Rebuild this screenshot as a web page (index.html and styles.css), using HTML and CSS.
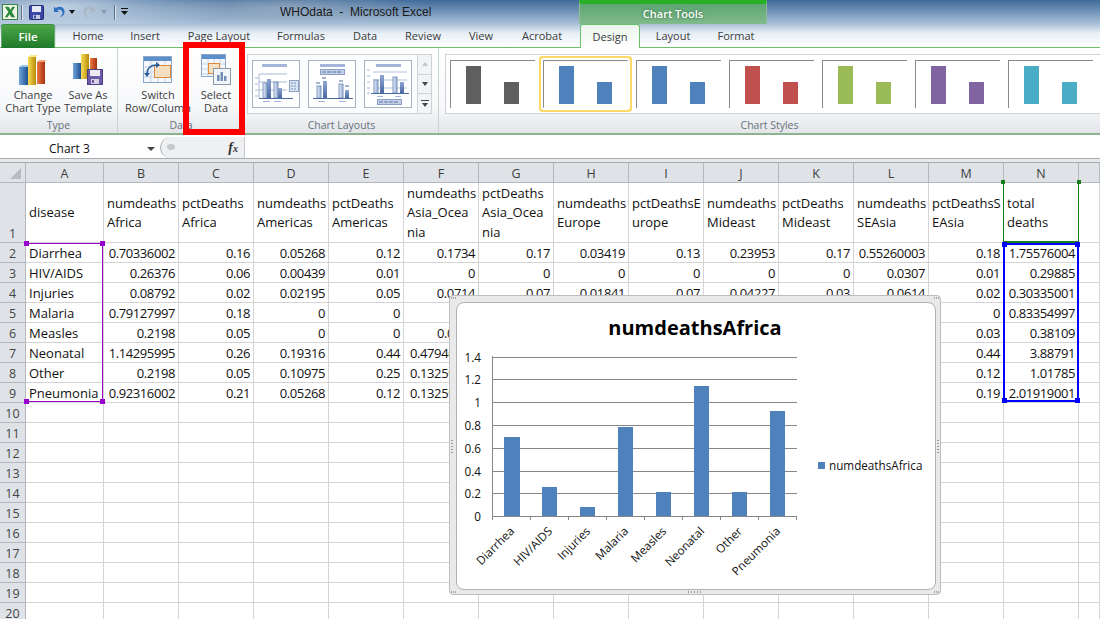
FILE: index.html
```html
<!DOCTYPE html>
<html lang="en">
<head>
    <meta charset="UTF-8">
    <meta name="viewport" content="width=device-width, initial-scale=1.0">
    <title>WHOdata - Microsoft Excel</title>
    <link rel="stylesheet" href="styles.css">
</head>
<body>
    <svg class="defs" width="0" height="0">
        <defs>
            <linearGradient id="barBlue" x1="0" x2="1" y1="0" y2="0"><stop offset="0" stop-color="#6fa6dc"/><stop offset="1" stop-color="#1f4f8f"/></linearGradient>
            <linearGradient id="barYellow" x1="0" x2="1" y1="0" y2="0"><stop offset="0" stop-color="#f7dc55"/><stop offset="1" stop-color="#b98a08"/></linearGradient>
            <linearGradient id="barRed" x1="0" x2="1" y1="0" y2="0"><stop offset="0" stop-color="#ec7a45"/><stop offset="1" stop-color="#a8300f"/></linearGradient>
            <linearGradient id="thumbBar" x1="0" x2="1" y1="0" y2="0"><stop offset="0" stop-color="#eef3fa"/><stop offset="1" stop-color="#8ea8d2"/></linearGradient>
            <linearGradient id="thumbBarDark" x1="0" x2="0" y1="0" y2="1"><stop offset="0" stop-color="#8fa6cf"/><stop offset="1" stop-color="#4a6aa5"/></linearGradient>
        </defs>
    </svg>

    <div class="titlebar">
        <div class="qat">
            <svg class="qat-logo" width="16" height="16" viewBox="0 0 17 17"><rect x="0.5" y="0.5" width="16" height="16" fill="#eef5e6" stroke="#2f7d3a"/><path d="M3 3h4l2 3 2-3h3l-3.6 5.2L14 14h-4l-2-3.2L6 14H3l3.8-5.6z" fill="#2a8a3a"/></svg>
            <span class="qat-sep"></span>
            <svg class="qat-save" width="15" height="15" viewBox="0 0 15 15"><rect x="0.5" y="0.5" width="14" height="14" rx="1" fill="#3c48a8" stroke="#20286e"/><rect x="3" y="1" width="9" height="6" fill="#e6eaf6"/><rect x="4" y="10" width="7" height="4" fill="#c9cde0"/><rect x="5" y="10.5" width="2" height="3" fill="#3c48a8"/></svg>
            <svg class="qat-undo" width="13" height="14" viewBox="0 0 14 14"><path d="M2 1v6h6L5.6 5C7 3.600 10 4 11 6.400c.8 2-.1 4.400-2.600 6.600C13 11.400 14.600 7 12.800 4 11 1 7 .6 4.200 3z" fill="#2f6fc0"/></svg>
            <span class="qat-drop"></span>
            <svg class="qat-redo" width="14" height="14" viewBox="0 0 14 14"><path d="M12 1v6H6l2.400-2C7 3.600 4 4 3 6.400c-.8 2 .1 4.400 2.600 6.600C1 11.400-.6 7 1.200 4 3 1 7 .6 9.800 3z" fill="#a9b6c4"/></svg>
            <span class="qat-drop muted"></span>
            <span class="qat-sep"></span>
            <svg class="qat-more" width="7" height="8" viewBox="0 0 7 8"><path d="M0 0h7v1H0zM0 3h7L3.500 7z" fill="#111"/></svg>
        </div>
        <div class="doc-title">WHOdata &nbsp;-&nbsp; Microsoft Excel</div>
        <div class="tools-band">Chart Tools</div>
    </div>

    <div class="tabs">
        <div class="tab tab-file">File</div>
        <div class="tab tab-home">Home</div>
        <div class="tab tab-insert">Insert</div>
        <div class="tab tab-page">Page Layout</div>
        <div class="tab tab-formulas">Formulas</div>
        <div class="tab tab-data">Data</div>
        <div class="tab tab-review">Review</div>
        <div class="tab tab-view">View</div>
        <div class="tab tab-acrobat">Acrobat</div>
        <div class="tab tab-design">Design</div>
        <div class="tab tab-layout">Layout</div>
        <div class="tab tab-format">Format</div>
    </div>

    <div class="ribbon">
        <div class="group group-type">
            <div class="group-body">
                <div class="big-btn btn-change">
                    <div class="big-icon">
                        <svg width="32" height="32" viewBox="-1 0 32 32">
                            <rect x="1" y="13" width="9" height="18" fill="url(#barBlue)"/><path d="M1 13l3-2h8l-2 2z" fill="#9cc3ea"/>
                            <rect x="10" y="3" width="8" height="28" fill="url(#barYellow)"/><path d="M10 3l3-2h7l-2 2z" fill="#fbeb8e"/>
                            <rect x="19" y="8" width="8" height="22" fill="url(#barRed)"/><path d="M19 8l2-2h7l-1 2z" fill="#f4a27c"/>
                        </svg>
                    </div>
                    <span>Change<br>Chart Type</span>
                </div>
                <div class="big-btn btn-saveas">
                    <div class="big-icon">
                        <svg width="32" height="32" viewBox="0 0 32 32">
                            <rect x="1" y="9" width="8" height="16" fill="url(#barBlue)"/>
                            <rect x="9" y="0" width="8" height="25" fill="url(#barYellow)"/>
                            <rect x="18" y="4" width="7" height="20" fill="url(#barRed)"/>
                            <rect x="15.500" y="15.500" width="15" height="15" fill="#6f5aa8" stroke="#4c3c80"/>
                            <rect x="18" y="16" width="10" height="6" fill="#eceaf4"/>
                            <rect x="19" y="25" width="8" height="5" fill="#d6d2e6"/><rect x="20" y="26" width="2" height="3" fill="#6f5aa8"/>
                        </svg>
                    </div>
                    <span>Save As<br>Template</span>
                </div>
            </div>
            <div class="group-label">Type</div>
        </div>
        <div class="group group-data">
            <div class="group-body">
                <div class="big-btn btn-switch">
                    <div class="big-icon">
                        <svg width="30" height="30" viewBox="0 -2 30 30">
                            <rect x="0.500" y="0.500" width="28" height="26" fill="#f4f8fd" stroke="#8aa6c8"/>
                            <rect x="1" y="1" width="27" height="4" fill="#5d8fcb"/>
                            <path d="M1 11h27M1 16h27M1 21h27M8 5v21M15 5v21M22 5v21" stroke="#c3d2e4"/>
                            <rect x="11.500" y="9.500" width="16" height="12" fill="#f4dfc0" stroke="#e08a3c"/>
                            <path d="M4 18c0-6 4-9 10-9" fill="none" stroke="#2b5c9e" stroke-width="1.500"/><path d="M13 6l4 3-4 3z" fill="#2b5c9e"/>
                            <path d="M1 17h6l-3 4z" fill="#2b5c9e"/>
                        </svg>
                    </div>
                    <span>Switch<br>Row/Column</span>
                </div>
                <div class="big-btn btn-select">
                    <div class="big-icon">
                        <svg width="30" height="32" viewBox="0 0 30 32">
                            <rect x="0.500" y="0.500" width="24" height="22" fill="#f4f8fd" stroke="#8aa6c8"/>
                            <rect x="1" y="1" width="23" height="4" fill="#5d8fcb"/>
                            <path d="M1 10h23M1 15h23M1 20h23M7 5v17M13 5v17M19 5v17" stroke="#c3d2e4"/>
                            <rect x="7.500" y="9.500" width="11" height="10" fill="#f6e0c2" stroke="#e08a3c"/>
                            <rect x="12.500" y="14.500" width="17" height="16" fill="#f1f4f8" stroke="#8b98a8"/>
                            <path d="M16 27v-6h2.500v6zM19.500 27v-9H22v9zM23 27v-5h2.500v5z" fill="#6f8fb4"/>
                        </svg>
                    </div>
                    <span>Select<br>Data</span>
                </div>
            </div>
            <div class="group-label">Data</div>
        </div>
        <div class="group group-layouts">
            <div class="group-body">
                <div class="layout-gallery">
                    <div class="thumb">
                        <svg width="46" height="46" viewBox="0 0 46 46">
                            <rect x="9" y="3" width="25" height="3" fill="#a3b5da"/>
                            <path d="M6 13h28M6 21h28M6 29h28M6 13v24" stroke="#a9b8d2" fill="none"/>
                            <path d="M2 17h3M2 23h3M2 29h3M2 35h3" stroke="#a9b8d2"/>
                            <rect x="10" y="22" width="4" height="15" fill="url(#thumbBar)" stroke="#7f96bf"/>
                            <rect x="14" y="18" width="4" height="19" fill="url(#thumbBarDark)"/>
                            <rect x="21" y="21" width="4" height="16" fill="url(#thumbBar)" stroke="#7f96bf"/>
                            <rect x="25" y="27" width="4" height="10" fill="url(#thumbBarDark)"/>
                            <path d="M6 37.500h34" stroke="#4d6a9e"/>
                            <path d="M10 40.500h7M21 40.500h7" stroke="#a3b5da"/>
                            <rect x="36.500" y="19.500" width="9" height="11" fill="#dde5f2" stroke="#8aa0c8"/>
                            <path d="M38 22h6M38 25h6M38 28h6" stroke="#6f8fb4" stroke-dasharray="2 1"/>
                        </svg>
                    </div>
                    <div class="thumb">
                        <svg width="46" height="46" viewBox="0 0 46 46">
                            <rect x="11" y="3" width="25" height="3" fill="#a3b5da"/>
                            <rect x="11.500" y="8.500" width="24" height="5" fill="#c3d0e6" stroke="#8aa0c8"/>
                            <path d="M13 11h20" stroke="#5b75a5" stroke-dasharray="4 1"/>
                            <path d="M7 22h4M13 17h4M30 20h4M36 25h4" stroke="#4d6a9e"/>
                            <rect x="8" y="25" width="4" height="12" fill="url(#thumbBar)" stroke="#7f96bf"/>
                            <rect x="14" y="20" width="4" height="17" fill="url(#thumbBarDark)"/>
                            <rect x="30" y="23" width="4" height="14" fill="url(#thumbBar)" stroke="#7f96bf"/>
                            <rect x="36" y="29" width="4" height="8" fill="url(#thumbBarDark)"/>
                            <path d="M4 37.500h40" stroke="#4d6a9e"/>
                            <path d="M9 40.500h7M30 40.500h7" stroke="#a3b5da"/>
                        </svg>
                    </div>
                    <div class="thumb">
                        <svg width="46" height="46" viewBox="0 0 46 46">
                            <rect x="11" y="3" width="25" height="3" fill="#a3b5da"/>
                            <path d="M8 11h34M8 19h34M8 27h34" stroke="#b5c3da"/>
                            <path d="M2 9h3M2 15h3M2 21h3M2 27h3M2 32h3" stroke="#a9b8d2"/>
                            <rect x="9" y="19" width="4" height="13" fill="url(#thumbBar)" stroke="#7f96bf"/>
                            <rect x="15" y="14" width="4" height="18" fill="url(#thumbBarDark)"/>
                            <rect x="28" y="16" width="4" height="16" fill="url(#thumbBar)" stroke="#7f96bf"/>
                            <rect x="35" y="21" width="4" height="11" fill="url(#thumbBarDark)"/>
                            <path d="M6 32.500h38" stroke="#4d6a9e"/>
                            <path d="M12 35.500h6M30 35.500h6" stroke="#a3b5da"/>
                            <rect x="12.500" y="38.500" width="24" height="5" fill="#c3d0e6" stroke="#8aa0c8"/>
                            <path d="M14 41h20" stroke="#5b75a5" stroke-dasharray="4 1"/>
                        </svg>
                    </div>
                    <div class="scroller">
                        <div class="scroll-btn"><i class="arrow-up"></i></div>
                        <div class="scroll-btn"><i class="arrow-down"></i></div>
                        <div class="scroll-btn"><i class="arrow-more"></i></div>
                    </div>
                </div>
            </div>
            <div class="group-label">Chart Layouts</div>
        </div>
        <div class="group group-styles">
            <div class="group-body">
                <div class="style-gallery">
                    <div class="style-tile"><i class="bar tall c-gray"></i><i class="bar short c-gray"></i></div>
                    <div class="style-tile selected"><i class="bar tall c-blue"></i><i class="bar short c-blue"></i></div>
                    <div class="style-tile"><i class="bar tall c-blue"></i><i class="bar short c-blue"></i></div>
                    <div class="style-tile"><i class="bar tall c-red"></i><i class="bar short c-red"></i></div>
                    <div class="style-tile"><i class="bar tall c-green"></i><i class="bar short c-green"></i></div>
                    <div class="style-tile"><i class="bar tall c-purple"></i><i class="bar short c-purple"></i></div>
                    <div class="style-tile"><i class="bar tall c-teal"></i><i class="bar short c-teal"></i></div>
                </div>
            </div>
            <div class="group-label">Chart Styles</div>
        </div>
    </div>
    <div class="select-box"></div>

    <div class="formula-bar">
        <div class="name-box">Chart 3<i class="name-arrow"></i></div>
        <div class="fx-box"><span class="fx-grip"></span><span class="fx">f<small>x</small></span></div>
        <div class="formula-input"></div>
    </div>
    <div class="formula-gap"></div>

    <div class="sheet">
        <table class="grid">
            <colgroup><col class="c-row"><col class="c-a"><col span="13" class="c-std"><col class="c-end"></colgroup>
            <tr class="head"><th class="corner"><i></i></th><th>A</th><th>B</th><th>C</th><th>D</th><th>E</th><th>F</th><th>G</th><th>H</th><th>I</th><th>J</th><th>K</th><th>L</th><th>M</th><th>N</th><th></th></tr>
            <tr class="row-title"><th class="rn">1</th><td>disease</td><td>numdeaths<br>Africa</td><td>pctDeaths<br>Africa</td><td>numdeaths<br>Americas</td><td>pctDeaths<br>Americas</td><td>numdeaths<br>Asia_Ocea<br>nia</td><td>pctDeaths<br>Asia_Ocea<br>nia</td><td>numdeaths<br>Europe</td><td>pctDeathsE<br>urope</td><td>numdeaths<br>Mideast</td><td>pctDeaths<br>Mideast</td><td>numdeaths<br>SEAsia</td><td>pctDeathsS<br>EAsia</td><td>total<br>deaths</td><td></td></tr>
            <tr><th class="rn">2</th><td>Diarrhea</td><td class="n">0.70336002</td><td class="n">0.16</td><td class="n">0.05268</td><td class="n">0.12</td><td class="n">0.1734</td><td class="n">0.17</td><td class="n">0.03419</td><td class="n">0.13</td><td class="n">0.23953</td><td class="n">0.17</td><td class="n">0.55260003</td><td class="n">0.18</td><td class="n">1.75576004</td><td></td></tr>
            <tr><th class="rn">3</th><td>HIV/AIDS</td><td class="n">0.26376</td><td class="n">0.06</td><td class="n">0.00439</td><td class="n">0.01</td><td class="n">0</td><td class="n">0</td><td class="n">0</td><td class="n">0</td><td class="n">0</td><td class="n">0</td><td class="n">0.0307</td><td class="n">0.01</td><td class="n">0.29885</td><td></td></tr>
            <tr><th class="rn">4</th><td>Injuries</td><td class="n">0.08792</td><td class="n">0.02</td><td class="n">0.02195</td><td class="n">0.05</td><td class="n">0.0714</td><td class="n">0.07</td><td class="n">0.01841</td><td class="n">0.07</td><td class="n">0.04227</td><td class="n">0.03</td><td class="n">0.0614</td><td class="n">0.02</td><td class="n">0.30335001</td><td></td></tr>
            <tr><th class="rn">5</th><td>Malaria</td><td class="n">0.79127997</td><td class="n">0.18</td><td class="n">0</td><td class="n">0</td><td></td><td></td><td></td><td></td><td></td><td></td><td></td><td class="n">0</td><td class="n">0.83354997</td><td></td></tr>
            <tr><th class="rn">6</th><td>Measles</td><td class="n">0.2198</td><td class="n">0.05</td><td class="n">0</td><td class="n">0</td><td class="cut cut-short">0.0</td><td></td><td></td><td></td><td></td><td></td><td></td><td class="n">0.03</td><td class="n">0.38109</td><td></td></tr>
            <tr><th class="rn">7</th><td>Neonatal</td><td class="n">1.14295995</td><td class="n">0.26</td><td class="n">0.19316</td><td class="n">0.44</td><td class="cut">0.47940</td><td></td><td></td><td></td><td></td><td></td><td></td><td class="n">0.44</td><td class="n">3.88791</td><td></td></tr>
            <tr><th class="rn">8</th><td>Other</td><td class="n">0.2198</td><td class="n">0.05</td><td class="n">0.10975</td><td class="n">0.25</td><td class="cut">0.13259</td><td></td><td></td><td></td><td></td><td></td><td></td><td class="n">0.12</td><td class="n">1.01785</td><td></td></tr>
            <tr><th class="rn">9</th><td>Pneumonia</td><td class="n">0.92316002</td><td class="n">0.21</td><td class="n">0.05268</td><td class="n">0.12</td><td class="cut">0.13259</td><td></td><td></td><td></td><td></td><td></td><td></td><td class="n">0.19</td><td class="n">2.01919001</td><td></td></tr>
            <tr><th class="rn">10</th><td></td><td></td><td></td><td></td><td></td><td></td><td></td><td></td><td></td><td></td><td></td><td></td><td></td><td></td><td></td></tr>
            <tr><th class="rn">11</th><td></td><td></td><td></td><td></td><td></td><td></td><td></td><td></td><td></td><td></td><td></td><td></td><td></td><td></td><td></td></tr>
            <tr><th class="rn">12</th><td></td><td></td><td></td><td></td><td></td><td></td><td></td><td></td><td></td><td></td><td></td><td></td><td></td><td></td><td></td></tr>
            <tr><th class="rn">13</th><td></td><td></td><td></td><td></td><td></td><td></td><td></td><td></td><td></td><td></td><td></td><td></td><td></td><td></td><td></td></tr>
            <tr><th class="rn">14</th><td></td><td></td><td></td><td></td><td></td><td></td><td></td><td></td><td></td><td></td><td></td><td></td><td></td><td></td><td></td></tr>
            <tr><th class="rn">15</th><td></td><td></td><td></td><td></td><td></td><td></td><td></td><td></td><td></td><td></td><td></td><td></td><td></td><td></td><td></td></tr>
            <tr><th class="rn">16</th><td></td><td></td><td></td><td></td><td></td><td></td><td></td><td></td><td></td><td></td><td></td><td></td><td></td><td></td><td></td></tr>
            <tr><th class="rn">17</th><td></td><td></td><td></td><td></td><td></td><td></td><td></td><td></td><td></td><td></td><td></td><td></td><td></td><td></td><td></td></tr>
            <tr><th class="rn">18</th><td></td><td></td><td></td><td></td><td></td><td></td><td></td><td></td><td></td><td></td><td></td><td></td><td></td><td></td><td></td></tr>
            <tr><th class="rn">19</th><td></td><td></td><td></td><td></td><td></td><td></td><td></td><td></td><td></td><td></td><td></td><td></td><td></td><td></td><td></td></tr>
            <tr><th class="rn">20</th><td></td><td></td><td></td><td></td><td></td><td></td><td></td><td></td><td></td><td></td><td></td><td></td><td></td><td></td><td></td></tr>
        </table>

        <!-- range highlights for the selected chart -->
        <div class="range range-cats"><i class="h tl"></i><i class="h tr"></i><i class="h bl"></i><i class="h br"></i></div>
        <div class="range range-name"><i class="h tl"></i><i class="h tr"></i></div>
        <div class="range range-values"><i class="h tl"></i><i class="h tr"></i><i class="h bl"></i><i class="h br"></i></div>

        <div class="chart">
            <div class="chart-inner">
                <!-- coordinates below are relative to the white chart area -->
                <svg class="plot" width="480" height="287" viewBox="0 0 480 287">
                    <text class="chart-title" x="238" y="32" text-anchor="middle">numdeathsAfrica</text>
                    <g class="gridlines">
                        <path d="M35 54.500h305M35 76.500h305M35 99.500h305M35 122.500h305M35 145.500h305M35 168.500h305M35 190.500h305"/>
                    </g>
                    <g class="y-labels" text-anchor="end">
                        <text x="24" y="59">1.4</text><text x="24" y="81">1.2</text><text x="24" y="104">1</text><text x="24" y="127">0.8</text><text x="24" y="150">0.6</text><text x="24" y="173">0.4</text><text x="24" y="195">0.2</text><text x="24" y="218">0</text>
                    </g>
                    <g class="bars">
                        <rect x="47" y="134" width="16" height="79"/>
                        <rect x="85" y="184" width="15" height="29"/>
                        <rect x="123" y="204" width="15" height="9"/>
                        <rect x="161" y="124" width="15" height="89"/>
                        <rect x="199" y="189" width="15" height="24"/>
                        <rect x="237" y="83" width="15" height="130"/>
                        <rect x="275" y="189" width="15" height="24"/>
                        <rect x="313" y="108" width="15" height="105"/>
                    </g>
                    <path class="axis" d="M35.500 53v164M35 213.500h305M73.500 213v4M111.500 213v4M149.500 213v4M187.500 213v4M225.500 213v4M263.500 213v4M301.500 213v4M339.500 213v4"/>
                    <g class="x-labels" text-anchor="end">
                        <text transform="translate(58 229) rotate(-45)">Diarrhea</text>
                        <text transform="translate(96 229) rotate(-45)">HIV/AIDS</text>
                        <text transform="translate(134 229) rotate(-45)">Injuries</text>
                        <text transform="translate(172 229) rotate(-45)">Malaria</text>
                        <text transform="translate(210 229) rotate(-45)">Measles</text>
                        <text transform="translate(248 229) rotate(-45)">Neonatal</text>
                        <text transform="translate(286 229) rotate(-45)">Other</text>
                        <text transform="translate(324 229) rotate(-45)">Pneumonia</text>
                    </g>
                    <rect class="bars" x="361" y="159" width="7" height="7"/>
                    <text class="legend" x="372" y="167">numdeathsAfrica</text>
                </svg>
            </div>
            <span class="grip grip-left"></span>
            <span class="grip grip-right"></span>
            <span class="grip-bottom"></span>
            <span class="dots dots-tl"></span>
            <span class="dots dots-tr"></span>
            <span class="dots dots-bl"></span>
            <span class="dots dots-br"></span>
        </div>
    </div>
</body>
</html>
```
FILE: styles.css
```css
html, body {
    margin: 0;
    padding: 0;
    width: 1100px;
    height: 619px;
    overflow: hidden;
    background-color: #ffffff;
    font-family: 'Open Sans', 'Noto Sans', sans-serif;
    color: #222;
}
.defs {
    position: absolute;
}

/* title bar */
.titlebar {
    position: relative;
    height: 24px;
    display: flex;
    background:
        radial-gradient(ellipse 170px 30px at 60px 6px, rgba(225, 235, 245, 0.75), rgba(225, 235, 245, 0)),
        radial-gradient(ellipse 150px 20px at 280px 8px, rgba(170, 185, 200, 0.6), rgba(170, 185, 200, 0)),
        linear-gradient(#3f6a9a, #a9c0d8);
}
.qat {
    display: flex;
    align-items: center;
    height: 24px;
    padding-left: 2px;
}
.qat-logo { margin-right: 3px; }
.qat-sep {
    width: 1px;
    height: 15px;
    background-color: #5f6f80;
    box-shadow: 1px 0 0 rgba(255, 255, 255, 0.6);
}
.qat-save { margin: 0 8px 0 7px; }
.qat-undo { margin-right: 4px; }
.qat-redo { margin: 0 4px 0 8px; }
.qat-drop {
    width: 0;
    height: 0;
    border: 3px solid transparent;
    border-top: 4px solid #111;
    margin-top: 3px;
}
.qat-drop.muted {
    border-top-color: #8496a8;
    margin-right: 7px;
}
.qat-more { margin-left: 6px; }
.doc-title {
    position: absolute;
    left: 280px;
    top: 4px;
    font-family: 'Liberation Sans', sans-serif;
    font-size: 12px;
    line-height: 17px;
    color: #1a1a1a;
    white-space: nowrap;
}
.tools-band {
    position: absolute;
    left: 579px;
    top: 0;
    width: 188px;
    height: 47px;
    box-sizing: border-box;
    border-top: 4px solid #27b026;
    border-left: 1px solid #8fbf96;
    border-right: 1px solid #8fbf96;
    background: linear-gradient(#5ea573, #7fba8b 45%, #f2f8f3 100%);
    color: #fff;
    font-size: 11px;
    font-weight: 600;
    text-align: center;
    line-height: 20px;
    text-shadow: 0 0 3px rgba(30, 90, 40, 0.8);
}

/* tabs */
.tabs {
    position: relative;
    height: 24px;
    box-sizing: border-box;
    background: linear-gradient(#a9c0d8, #e6eef6 40%, #ffffff);
    font-size: 11px;
    color: #3b3b3b;
    border-bottom: 1px solid #6cc06c;
}
.tab {
    position: absolute;
    top: 0;
    height: 23px;
    line-height: 24px;
    text-align: center;
    transform: translateX(-50%);
    white-space: nowrap;
}
.tab-file {
    left: 28px;
    width: 55px;
    height: 24px;
    box-sizing: border-box;
    background: linear-gradient(#4ea646, #1d7a2b);
    border: 1px solid #3e8d43;
    border-bottom: none;
    border-radius: 4px 4px 0 0;
    color: #fff;
    font-weight: 600;
    font-size: 11.500px;
}
.tab-home { left: 88px; }
.tab-insert { left: 145px; }
.tab-page { left: 219px; }
.tab-formulas { left: 301px; }
.tab-data { left: 365px; }
.tab-review { left: 423px; }
.tab-view { left: 481px; }
.tab-acrobat { left: 542px; }
.tab-design {
    left: 610px;
    width: 60px;
    height: 24px;
    box-sizing: border-box;
    background: linear-gradient(#eaf5ec, #ffffff);
    border: 1px solid #6cc06c;
    border-bottom: none;
    border-radius: 3px 3px 0 0;
    z-index: 1;
}
.tab-layout { left: 673px; }
.tab-format { left: 736px; }

/* ribbon */
.ribbon {
    height: 87px;
    box-sizing: border-box;
    display: flex;
    background: linear-gradient(#ffffff, #f7f8fa 70%, #e2e5e9);
    border-bottom: 2px solid #8db48f;
    font-size: 11px;
    color: #3c3c3c;
}
.group {
    flex: none;
    display: flex;
    flex-direction: column;
    border-right: 1px solid #c6d6c8;
    box-sizing: border-box;
}
.group-body {
    height: 70px;
    display: flex;
}
.group-label {
    height: 15px;
    line-height: 14px;
    text-align: center;
    color: #67707c;
    font-size: 10.500px;
}
.group-type { width: 118px; }
.group-data { width: 127px; }
.group-layouts { width: 194px; }
.group-styles {
    flex: 1;
    min-width: 0;
    border-right: none;
}
.big-btn {
    display: flex;
    flex-direction: column;
    align-items: center;
    white-space: nowrap;
    text-align: center;
    line-height: 13px;
}
.big-icon {
    height: 34px;
    margin-top: 6px;
}
.big-icon svg { display: block; }
.btn-change { width: 56px; margin-left: 5px; }
.btn-saveas { width: 54px; }
.btn-switch { width: 66px; margin-left: 7px; }
.btn-select { width: 50px; }

/* chart layouts gallery */
.layout-gallery {
    display: flex;
    align-self: flex-start;
    box-sizing: border-box;
    width: 185px;
    height: 60px;
    margin: 6px 0 0 2px;
    padding-left: 4px;
    border: 1px solid #cfd3d8;
    border-right: none;
    background-color: #fbfcfd;
    align-items: center;
    gap: 8px;
}
.thumb {
    width: 48px;
    height: 48px;
    box-sizing: border-box;
    border: 1px solid #a9b3c0;
    background-color: #ffffff;
}
.thumb svg { display: block; }
.scroller {
    display: flex;
    flex-direction: column;
    margin: -1px 0 -1px -3px;
    height: 60px;
    width: 15px;
    box-sizing: border-box;
    border: 1px solid #cfd3d8;
    background-color: #f2f4f6;
}
.scroll-btn {
    flex: 1;
    display: flex;
    align-items: center;
    justify-content: center;
    border-bottom: 1px solid #cfd3d8;
}
.scroll-btn:last-child { border-bottom: none; }
.arrow-up {
    border: 3px solid transparent;
    border-bottom: 4px solid #c2c6cc;
    border-top: none;
}
.arrow-down {
    border: 3px solid transparent;
    border-top: 4px solid #444;
    border-bottom: none;
}
.arrow-more {
    position: relative;
    top: 1px;
    border: 3px solid transparent;
    border-top: 4px solid #444;
    border-bottom: none;
}
.arrow-more::before {
    content: '';
    position: absolute;
    left: -4px;
    top: -7px;
    width: 8px;
    height: 1px;
    background-color: #444;
}

/* chart styles gallery */
.style-gallery {
    display: flex;
    align-self: flex-start;
    align-items: center;
    box-sizing: border-box;
    width: 660px;
    height: 60px;
    margin: 6px 0 0 6px;
    padding-left: 4px;
    gap: 8px;
    border: 1px solid #cfd3d8;
    border-right: none;
    background-color: #ffffff;
}
.style-tile {
    position: relative;
    flex: none;
    width: 85px;
    height: 48px;
    box-sizing: border-box;
    border-top: 1px solid #8a8a8a;
    border-left: 1px solid #8a8a8a;
}
.style-tile.selected {
    box-shadow: 0 0 0 2px #fff, 0 0 0 4px #ffd966;
    border-radius: 1px;
}
.bar {
    position: absolute;
    bottom: 4px;
    width: 15px;
}
.bar.tall { left: 15px; height: 38px; }
.bar.short { left: 53px; height: 22px; }
.c-gray { background-color: #5f5f5f; }
.c-blue { background-color: #4f81bd; }
.c-red { background-color: #c0504d; }
.c-green { background-color: #9bbb59; }
.c-purple { background-color: #8064a2; }
.c-teal { background-color: #4bacc6; }

/* red annotation around Select Data */
.select-box {
    position: absolute;
    left: 183px;
    top: 42px;
    width: 50px;
    height: 81px;
    border: 6px solid #ff0000;
}

/* formula bar */
.formula-bar {
    display: flex;
    height: 22px;
    box-sizing: border-box;
    margin-top: 2px;
    background-color: #ffffff;
    border-bottom: 1px solid #a8acb0;
    font-size: 12px;
}
.name-box {
    position: relative;
    width: 160px;
    line-height: 23px;
    padding-left: 49px;
    box-sizing: border-box;
    color: #111;
}
.name-arrow {
    position: absolute;
    left: 147px;
    top: 10px;
    border: 4px solid transparent;
    border-top: 4px solid #444;
    border-bottom: none;
}
.fx-box {
    position: relative;
    width: 85px;
    box-sizing: border-box;
    background-color: #eef0f2;
    border-left: 1px solid #a8acb0;
    border-right: 1px solid #c4c8cc;
    border-radius: 11px 0 0 11px;
}
.fx-grip {
    position: absolute;
    left: 6px;
    top: 7px;
    width: 8px;
    height: 6px;
    border-radius: 50%;
    background-color: #c4c8cc;
}
.fx {
    position: absolute;
    right: 6px;
    top: 0;
    line-height: 21px;
    font-family: 'Liberation Serif', serif;
    font-weight: bold;
    font-style: italic;
    font-size: 14px;
    color: #333;
}
.fx small { font-size: 10px; }
.formula-input { flex: 1; }
.formula-gap {
    height: 4px;
    box-sizing: border-box;
    background-color: #e6e8ea;
    border-bottom: 1px solid #a8acb0;
}

/* worksheet */
.sheet {
    position: relative;
    height: 456px;
    overflow: hidden;
}
.grid {
    table-layout: fixed;
    width: 1100px;
    border-collapse: separate;
    border-spacing: 0;
    font-size: 13px;
    color: #111;
}
.c-row { width: 26px; }
.c-a { width: 78px; }
.c-std { width: 75px; }
.c-end { width: 21px; }
.grid tr { height: 20px; }
.grid .row-title { height: 60px; }
.grid td {
    box-sizing: border-box;
    padding: 0 3px;
    border-right: 1px solid #d4d4d4;
    border-bottom: 1px solid #d4d4d4;
    line-height: 18px;
    white-space: nowrap;
    overflow: hidden;
}
.grid .row-title td {
    padding-top: 1px;
    line-height: 19.300px;
}
.grid td.n {
    text-align: right;
    letter-spacing: -0.400px;
}
.grid td.cut {
    padding-left: 6px;
    letter-spacing: -0.400px;
}
.grid td.cut-short { padding-left: 33px; }
.grid th {
    box-sizing: border-box;
    padding: 0;
    background-color: #dfe3e8;
    border-right: 1px solid #b4b8bc;
    border-bottom: 1px solid #b4b8bc;
    font-weight: normal;
    font-size: 12.500px;
    line-height: 17px;
    color: #3e3e3e;
}
.grid .head th { padding-top: 1px; }
.grid .rn {
    vertical-align: bottom;
    color: #444;
}
.corner { position: relative; }
.corner i {
    position: absolute;
    right: 4px;
    bottom: 3px;
    border-left: 11px solid transparent;
    border-bottom: 11px solid #b7bcc2;
}

/* selection ranges */
.range {
    position: absolute;
    box-sizing: border-box;
}
.range-cats {
    left: 27px;
    top: 80px;
    width: 76px;
    height: 159px;
    border-top: 1px solid #9900cc;
    border-right: 1px solid #9900cc;
    border-bottom: 1px solid #9900cc;
}
.range-name {
    left: 1003px;
    top: 20px;
    width: 76px;
    height: 60px;
    border-left: 1px solid #1a7f1a;
    border-right: 1px solid #1a7f1a;
    border-bottom: 2px solid #1a7f1a;
}
.range-values {
    left: 1003px;
    top: 80px;
    width: 76px;
    height: 159px;
    border: 2px solid #0000ff;
}
.h {
    position: absolute;
    width: 5px;
    height: 5px;
}
.range-cats .h { background-color: #9900cc; }
.range-name .h { background-color: #1a7f1a; width: 4px; height: 4px; }
.range-values .h { background-color: #0000ff; }
.tl { left: -3px; top: -3px; }
.tr { right: -3px; top: -3px; }
.bl { left: -3px; bottom: -3px; }
.br { right: -3px; bottom: -3px; }

/* embedded chart */
.chart {
    position: absolute;
    left: 449px;
    top: 132px;
    width: 492px;
    height: 300px;
    box-sizing: border-box;
    padding: 6px;
    background-color: #e9e9e9;
    border: 1px solid #bdbdbd;
    border-radius: 4px;
}
.chart-inner {
    width: 478px;
    height: 286px;
    background-color: #ffffff;
    border: 1px solid #b0b0b0;
    border-radius: 8px;
    overflow: hidden;
}
.plot {
    display: block;
    font-family: 'Open Sans', 'Noto Sans', sans-serif;
    font-size: 11.700px;
}
.chart-title {
    font-size: 20px;
    font-weight: 700;
    fill: #000;
}
.gridlines path {
    stroke: #868686;
    fill: none;
}
.axis {
    stroke: #868686;
    fill: none;
}
.bars rect, rect.bars { fill: #4f81bd; }
.y-labels text, .x-labels text, .legend { fill: #111; }
.grip {
    position: absolute;
    top: 144px;
    width: 2px;
    height: 14px;
    background: repeating-linear-gradient(#9a9a9a 0 1px, transparent 1px 3px);
}
.grip-left { left: 1px; }
.grip-right { right: 1px; }
.grip-bottom {
    position: absolute;
    left: 238px;
    bottom: 1px;
    width: 14px;
    height: 2px;
    background: repeating-linear-gradient(90deg, #9a9a9a 0 1px, transparent 1px 3px);
}
.dots {
    position: absolute;
    width: 5px;
    height: 2px;
    background: repeating-linear-gradient(90deg, #a8a8a8 0 1px, transparent 1px 2px);
}
.dots-tl { left: 1px; top: 1px; }
.dots-tr { right: 1px; top: 1px; }
.dots-bl { left: 1px; bottom: 1px; }
.dots-br { right: 1px; bottom: 1px; }
```
